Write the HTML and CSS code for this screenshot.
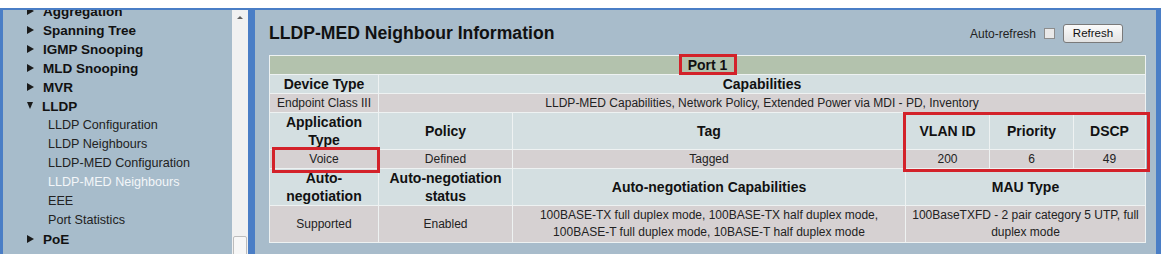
FILE: index.html
```html
<!DOCTYPE html>
<html>
<head>
<meta charset="utf-8">
<link rel="stylesheet" href="styles.css">
</head>
<body>
<div class="topstrip"></div>
<div class="frame">
  <nav class="sidebar">
    <ul class="menu">
      <li class="grp"><span class="arr"></span>Aggregation</li>
      <li class="grp"><span class="arr"></span>Spanning Tree</li>
      <li class="grp"><span class="arr"></span>IGMP Snooping</li>
      <li class="grp"><span class="arr"></span>MLD Snooping</li>
      <li class="grp"><span class="arr"></span>MVR</li>
      <li class="grp"><span class="arr down"></span>LLDP</li>
      <li class="sub">LLDP Configuration</li>
      <li class="sub">LLDP Neighbours</li>
      <li class="sub">LLDP-MED Configuration</li>
      <li class="sub active">LLDP-MED Neighbours</li>
      <li class="sub">EEE</li>
      <li class="sub">Port Statistics</li>
      <li class="grp"><span class="arr"></span>PoE</li>
      <li class="grp"><span class="arr"></span>Filtering Data Base</li>
    </ul>
  </nav>
  <div class="scrollbar"><span class="uparrow"></span><span class="thumb"></span></div>
  <main class="panel">
    <div class="header">
      <h1 class="title">LLDP-MED Neighbour Information</h1>
      <div class="controls">
        <span class="autolabel">Auto-refresh</span>
        <span class="checkbox"></span>
        <span class="btn">Refresh</span>
      </div>
    </div>
    <table class="info">
      <colgroup>
        <col class="c1"><col class="c2"><col class="c3"><col class="c4"><col class="c5"><col class="c6">
      </colgroup>
      <tr class="port"><th colspan="6">Port 1</th></tr>
      <tr><th>Device Type</th><th colspan="5">Capabilities</th></tr>
      <tr class="data"><td>Endpoint Class III</td><td colspan="5">LLDP-MED Capabilities, Network Policy, Extended Power via MDI - PD, Inventory</td></tr>
      <tr><th>Application Type</th><th>Policy</th><th>Tag</th><th>VLAN ID</th><th>Priority</th><th>DSCP</th></tr>
      <tr class="data"><td>Voice</td><td>Defined</td><td>Tagged</td><td>200</td><td>6</td><td>49</td></tr>
      <tr><th>Auto-negotiation</th><th>Auto-negotiation status</th><th>Auto-negotiation Capabilities</th><th colspan="3">MAU Type</th></tr>
      <tr class="data"><td>Supported</td><td>Enabled</td><td class="caps"><span class="nw">100BASE-TX</span> full duplex mode, <span class="nw">100BASE-TX</span> half duplex mode, <span class="nw">100BASE-T</span> full duplex mode, <span class="nw">10BASE-T</span> half duplex mode</td><td colspan="3" class="mau">100BaseTXFD - 2 pair category 5 UTP, full duplex mode</td></tr>
    </table>
    <div class="mark mark-port"></div>
    <div class="mark mark-voice"></div>
    <div class="mark mark-vlan"></div>
  </main>
</div>
</body>
</html>
```

FILE: styles.css
```css
html, body {
  margin: 0;
  padding: 0;
  background: #ffffff;
  font-family: "Liberation Sans", Arial, sans-serif;
  overflow: hidden;
}

.topstrip {
  height: 8px;
  background: #ffffff;
}

.frame {
  display: flex;
  height: 246px;
  padding: 2px 6px 0 3px;
  box-sizing: border-box;
  background: #4a7ec6;
  overflow: hidden;
}

.sidebar {
  width: 229px;
  flex: none;
  background: #a7bccb;
  overflow: hidden;
}

.menu {
  list-style: none;
  margin: -8px 0 0 0;
  padding: 0;
}

.menu li {
  line-height: 19px;
  white-space: nowrap;
}

.grp {
  padding-left: 24px;
  font-size: 13.5px;
  font-weight: bold;
  color: #111;
}

.arr {
  display: inline-block;
  width: 0;
  height: 0;
  border-top: 4px solid transparent;
  border-bottom: 4px solid transparent;
  border-left: 7px solid #1a1a1a;
  margin-right: 9px;
  vertical-align: 1px;
}

.arr.down {
  border-left: 3.5px solid transparent;
  border-right: 3.5px solid transparent;
  border-top: 7px solid #1a1a1a;
  border-bottom: 0;
  vertical-align: 2px;
}

.sub {
  padding-left: 45px;
  font-size: 12.6px;
  color: #222;
}

.sub.active {
  color: #f3f6f9;
}

.scrollbar {
  width: 16px;
  flex: none;
  margin-right: 7px;
  background: #f1f1f1;
  display: flex;
  flex-direction: column;
  align-items: center;
}

.uparrow {
  display: block;
  width: 0;
  height: 0;
  margin-top: 6px;
  border-left: 3px solid transparent;
  border-right: 3px solid transparent;
  border-bottom: 3px solid #606060;
}

.thumb {
  display: block;
  margin-top: auto;
  width: 14px;
  height: 22px;
  margin-bottom: -4px;
  box-sizing: border-box;
  border: 1px solid #bdbdbd;
  border-radius: 2px;
  background: #f7f7f7;
}

.panel {
  position: relative;
  flex: 1;
  background: #a8bccb;
}

.header {
  display: flex;
  align-items: center;
  justify-content: space-between;
  height: 19px;
  padding: 14px 33px 0 14px;
  margin-bottom: 12px;
}

.title {
  margin: 0;
  font-size: 17.6px;
  font-weight: bold;
  color: #111;
  line-height: 19px;
}

.controls {
  display: flex;
  align-items: center;
}

.autolabel {
  font-size: 12px;
  color: #222;
}

.checkbox {
  width: 11px;
  height: 11px;
  box-sizing: border-box;
  margin: 0 8px 0 8px;
  border: 1px solid #8d8d8d;
  background: #e9e9e9;
}

.btn {
  width: 60px;
  height: 19px;
  box-sizing: border-box;
  border: 1px solid #7a7a7a;
  border-radius: 3px;
  background: linear-gradient(#fbfbfb, #e2e2e2);
  font-size: 11.5px;
  line-height: 17px;
  text-align: center;
  color: #111;
}

.info {
  margin: 0 10px 0 14px;
  width: 876px;
  table-layout: fixed;
  border-collapse: collapse;
  border: 1px solid #eef2f2;
}

.c1 { width: 109px; }
.c2 { width: 134px; }
.c3 { width: 393px; }
.c4 { width: 84px; }
.c5 { width: 84px; }
.c6 { width: 72px; }

.info th,
.info td {
  border: 1px solid #eef2f2;
  padding: 0;
  text-align: center;
  vertical-align: middle;
  line-height: 18px;
}

.info th {
  background: #d4dfe1;
  font-size: 14px;
  font-weight: bold;
  color: #111;
}

.info tr.port th {
  background: #b3c2ad;
}

.info td {
  background: #d6d1d2;
  font-size: 12px;
  color: #222;
  line-height: 17px;
}

.info tr.data td {
  height: 18px;
}

.info td.caps,
.info td.mau {
  padding: 1px 1px;
}

.nw {
  white-space: nowrap;
}

.mark {
  position: absolute;
  box-sizing: border-box;
  border: 3px solid #d3222a;
}

.mark-port {
  left: 424px;
  top: 44px;
  width: 58px;
  height: 21px;
}

.mark-voice {
  left: 17px;
  top: 137px;
  width: 108px;
  height: 26px;
}

.mark-vlan {
  left: 648px;
  top: 102px;
  width: 247px;
  height: 60px;
}
```
